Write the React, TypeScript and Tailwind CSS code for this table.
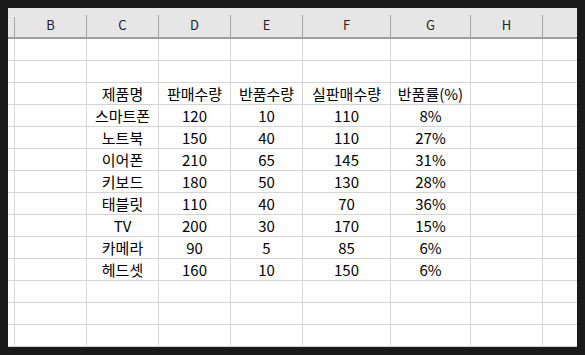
import React from "react";

const cols = [
  { k: "", w: "w-[7px]" },
  { k: "B", w: "w-[72px]" },
  { k: "C", w: "w-[72px]" },
  { k: "D", w: "w-[72px]" },
  { k: "E", w: "w-[72px]" },
  { k: "F", w: "w-[88px]" },
  { k: "G", w: "w-[80px]" },
  { k: "H", w: "w-[72px]" },
  { k: "", w: "flex-1" },
];

const data: string[][] = [
  ["제품명", "판매수량", "반품수량", "실판매수량", "반품률(%)"],
  ["스마트폰", "120", "10", "110", "8%"],
  ["노트북", "150", "40", "110", "27%"],
  ["이어폰", "210", "65", "145", "31%"],
  ["키보드", "180", "50", "130", "28%"],
  ["태블릿", "110", "40", "70", "36%"],
  ["TV", "200", "30", "170", "15%"],
  ["카메라", "90", "5", "85", "6%"],
  ["헤드셋", "160", "10", "150", "6%"],
];

const rows: (string[] | null)[] = [null, null, ...data, null, null, null];

const font = { fontFamily: '"Noto Sans CJK KR", "Noto Sans", sans-serif' };

export default function App() {
  return (
    <div className="w-[585px] h-[355px] bg-[#1a1a1a] p-2" style={font}>
      <div className="w-full h-full bg-white flex flex-col overflow-hidden">
        <div className="flex h-[31px] bg-[#e6e6e6] border-b-2 border-[#9e9e9e]">
          {cols.map((c, i) => (
            <div key={i} className={`${c.w} flex flex-col`}>
              <div className="h-[9px]" />
              <div
                className={`flex-1 flex items-center justify-center text-[13px] text-[#222] pb-[3px] ${
                  i < cols.length - 1 ? "border-r border-[#a6a6a6]" : ""
                }`}
              >
                {c.k}
              </div>
            </div>
          ))}
        </div>
        {rows.map((r, ri) => (
          <div key={ri} className="flex h-[22px] border-b border-[#d4d4d4] shrink-0">
            {cols.map((c, ci) => {
              const text = r && ci >= 2 && ci <= 6 ? r[ci - 2] : "";
              return (
                <div
                  key={ci}
                  className={`${c.w} flex items-center justify-center text-[15px] leading-none text-black whitespace-nowrap ${
                    ci < cols.length - 1 ? "border-r border-[#d4d4d4]" : ""
                  }`}
                >
                  {text}
                </div>
              );
            })}
          </div>
        ))}
      </div>
    </div>
  );
}
